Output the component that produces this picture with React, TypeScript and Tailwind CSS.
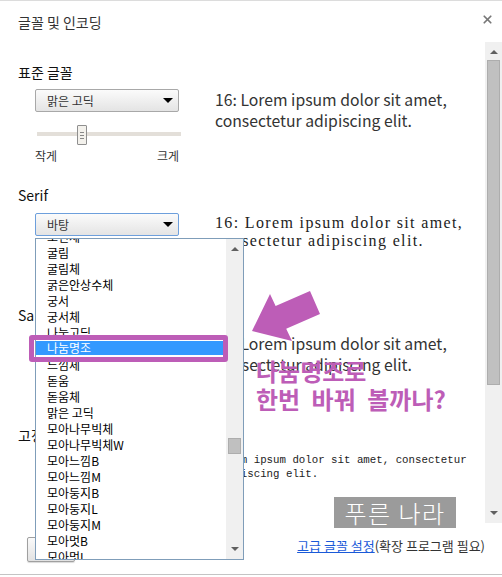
import { X } from "lucide-react";

const kr = "font-['Noto_Sans_CJK_KR',sans-serif]";

const fonts = [
  "모던체",
  "굴림",
  "굴림체",
  "굵은안상수체",
  "궁서",
  "궁서체",
  "나눔고딕",
  "나눔명조",
  "느낌체",
  "돋움",
  "돋움체",
  "맑은 고딕",
  "모아나무빅체",
  "모아나무빅체W",
  "모아느낌B",
  "모아느낌M",
  "모아둥지B",
  "모아둥지L",
  "모아둥지M",
  "모아멋B",
  "모아멋L",
];

const Caret = ({ up }: { up?: boolean }) => (
  <span
    className={
      up
        ? "h-0 w-0 border-x-[4px] border-b-[4px] border-x-transparent border-b-[#606060]"
        : "h-0 w-0 border-x-[4px] border-t-[4px] border-x-transparent border-t-[#606060]"
    }
  />
);

const Select = ({ value, focused }: { value: string; focused?: boolean }) => (
  <div
    className={`flex h-[23px] w-[144px] items-center justify-between rounded-[2px] border bg-linear-to-b from-[#fbfbfb] to-[#e4e4e4] pl-[11px] pr-[5px] text-[12px] text-[#333] ${
      focused ? "border-[#6d9fdc]" : "border-[#a8a8a8]"
    }`}
  >
    <span>{value}</span>
    <span className="h-0 w-0 border-x-[5px] border-t-[5px] border-x-transparent border-t-black" />
  </div>
);

const Label = ({ children }: { children: string }) => (
  <div className="h-[20px] text-[14px] leading-[20px] text-[#111]">{children}</div>
);

const SansSample = () => (
  <div className="text-[15.75px] leading-[21px] text-[#333]">
    <div>16: Lorem ipsum dolor sit amet,</div>
    <div>consectetur adipiscing elit.</div>
  </div>
);

export default function App() {
  return (
    <div className={`relative h-[577px] w-[502px] overflow-hidden border-t border-[#dcdcdc] bg-white ${kr}`}>
      {/* header */}
      <div className="flex h-[41px] items-start justify-between pl-[18px] pr-[8px] pt-[11px]">
        <span className="text-[14px] leading-[20px] text-[#333]">글꼴 및 인코딩</span>
        <X className="mt-[1px] h-[13px] w-[13px] text-[#777]" strokeWidth={3.2} />
      </div>

      {/* body */}
      <div className="flex h-[481px]">
        <div className="flex-1 overflow-hidden pl-[18px] pt-[20px]">
          {/* standard */}
          <Label>표준 글꼴</Label>
          <div className="mt-[7px] flex">
            <div className="w-[197px] pl-[17px]">
              <Select value="맑은 고딕" />
              <div className="relative ml-[2px] mt-[13px] h-[20px] w-[144px]">
                <div className="absolute inset-x-0 top-[7px] h-[4px] bg-[#e3dfd9]" />
                <div className="absolute left-[40px] top-0 flex h-[20px] w-[10px] flex-col items-center justify-center gap-[2px] rounded-[1px] border border-[#8f8f8f] bg-[#f3f1ec]">
                  <span className="h-px w-[4px] bg-[#888]" />
                  <span className="h-px w-[4px] bg-[#888]" />
                  <span className="h-px w-[4px] bg-[#888]" />
                </div>
              </div>
              <div className="mt-[3px] flex w-[144px] justify-between text-[12px] leading-[16px] text-[#333]">
                <span>작게</span>
                <span>크게</span>
              </div>
            </div>
            <SansSample />
          </div>

          {/* serif */}
          <div className="mt-[21px]">
            <Label>Serif</Label>
          </div>
          <div className="mt-[8px] flex h-[92px]">
            <div className="w-[197px] pl-[17px]">
              <Select value="바탕" focused />
            </div>
            <div className="pt-px font-['Liberation_Serif',serif] text-[16px] leading-[18px] tracking-[1.35px] text-[#222]">
              <div>16: Lorem ipsum dolor sit amet,</div>
              <div>consectetur adipiscing elit.</div>
            </div>
          </div>

          {/* sans */}
          <Label>Sans-serif</Label>
          <div className="mt-[8px] flex h-[92px]">
            <div className="w-[197px] pl-[17px]">
              <Select value="맑은 고딕" />
            </div>
            <SansSample />
          </div>

          {/* fixed */}
          <Label>고정폭 글꼴</Label>
          <div className="mt-[8px] flex">
            <div className="w-[197px] pl-[17px]">
              <Select value="굴림체" />
            </div>
            <div className="font-['Liberation_Mono',monospace] text-[10.75px] leading-[14px] text-[#222]">
              <div>Lorem ipsum dolor sit amet, consectetur</div>
              <div>adipiscing elit.</div>
            </div>
          </div>
        </div>

        {/* page scrollbar */}
        <div className="flex w-[17px] flex-col items-center bg-[#f0f0f0] pb-[8px] pt-[8px]">
          <Caret up />
          <div className="mt-[6px] h-[325px] w-[13px] border border-[#adadad] bg-[#c0c0c0]" />
          <div className="flex-1" />
          <Caret />
        </div>
      </div>

      {/* footer */}
      <div className="flex h-[52px] items-start justify-between border-b border-[#c4c4c4] pl-[27px] pr-[17px] pt-[14px]">
        <div className="h-[25px] w-[48px] rounded-[2px] border border-[#a0a0a0] bg-linear-to-b from-[#fafafa] to-[#e2e2e2] shadow-[0_1px_1px_rgba(0,0,0,0.15)]" />
        <div className="text-[13px] leading-[18px] text-[#333]">
          <a className="text-[#1a5ad8] underline">고급 글꼴 설정</a>(확장 프로그램 필요)
        </div>
      </div>

      {/* open dropdown */}
      <div className="absolute left-[35px] top-[237px] flex h-[322px] w-[209px] border border-[#7f9db9] bg-white">
        <div className="flex-1 overflow-hidden">
          <div className="-mt-[10px]">
            {fonts.map((f) =>
              f === "나눔명조" ? (
                <div key={f} className="h-[16px] border-b-2 border-white bg-[#3399ff] pl-[11px] text-[12px] leading-[14px] text-white">
                  {f}
                </div>
              ) : (
                <div key={f} className="h-[16px] pl-[11px] text-[12px] leading-[16px] text-black">
                  {f}
                </div>
              )
            )}
          </div>
        </div>
        <div className="flex w-[17px] flex-col items-center bg-[#f0f0f0] py-[8px]">
          <Caret up />
          <div className="mt-[187px] h-[16px] w-[13px] border border-[#adadad] bg-[#c0c0c0]" />
          <div className="flex-1" />
          <Caret />
        </div>
      </div>

      {/* highlight frame */}
      <div className="absolute left-[29px] top-[334px] h-[27px] w-[199px] rounded-[3px] border-[5px] border-[#bd5db7]" />

      {/* annotation arrow */}
      <svg className="pointer-events-none absolute left-0 top-0" width="502" height="577">
        <polygon
          points="252,330 270,293 275.6,305 310,290 320,313 286.2,327.7 292,340"
          fill="#bd5db7"
        />
      </svg>

      {/* annotation text */}
      <div className="absolute left-[256px] top-[356px] text-[24px] font-bold leading-[28px] text-[#bd5db7] [word-spacing:6px]">
        <div>나눔명조로</div>
        <div>한번 바꿔 볼까나?</div>
      </div>

      {/* watermark */}
      <div className="absolute left-[334px] top-[496px] flex h-[31px] w-[122px] items-center justify-center bg-[#9b9b9b] text-[24px] font-light leading-none tracking-[1.5px] text-white">
        푸른 나라
      </div>
    </div>
  );
}
